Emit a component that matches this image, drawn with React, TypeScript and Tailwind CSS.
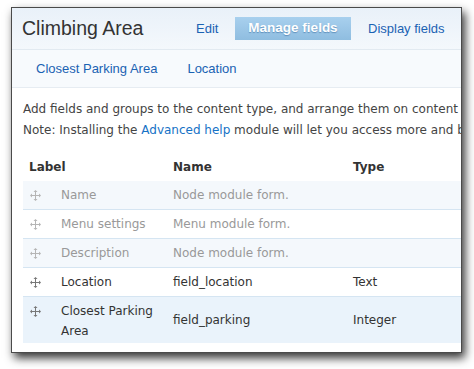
import React from "react";

const Drag = ({ faded }: { faded?: boolean }) => (
  <svg width="11" height="11" viewBox="0 0 11 11" className="shrink-0">
    <g fill={faded ? "#b5b5b5" : "#777"}>
      <rect x="5" y="1" width="1" height="9" />
      <rect x="1" y="5" width="9" height="1" />
      <polygon points="5.5,0 3.5,2 7.5,2" />
      <polygon points="5.5,11 3.5,9 7.5,9" />
      <polygon points="0,5.5 2,3.5 2,7.5" />
      <polygon points="11,5.5 9,3.5 9,7.5" />
    </g>
  </svg>
);

const rows = [
  { label: ["Name"], name: "Node module form.", type: "", faded: true, bg: "bg-[#f4f8fc]" },
  { label: ["Menu settings"], name: "Menu module form.", type: "", faded: true, bg: "bg-white" },
  { label: ["Description"], name: "Node module form.", type: "", faded: true, bg: "bg-[#f4f8fc]" },
  { label: ["Location"], name: "field_location", type: "Text", faded: false, bg: "bg-white" },
  { label: ["Closest Parking", "Area"], name: "field_parking", type: "Integer", faded: false, bg: "bg-[#eaf3fb]" },
];

export default function App() {
  return (
    <div className="w-[474px] h-[369px] bg-white pl-[11px] pt-[7px]">
      <div
        className="w-[451px] h-[346px] overflow-hidden border border-[#4a4a4a] bg-white flex flex-col shadow-[3px_5px_9px_rgba(0,0,0,0.8)]"
      >
        <div className="h-[42px] shrink-0 flex items-center border-b border-[#e2eaf1] bg-gradient-to-b from-[#e9f1f9] to-[#f4f8fc]">
          <div className="pl-[10px] w-[184px] text-[19.5px] text-[#333] font-['Liberation_Sans',Arial,sans-serif] leading-none">
            Climbing Area
          </div>
          <div className="flex items-center font-['Liberation_Sans',Arial,sans-serif] text-[13px]">
            <span className="text-[#1a62b3] pl-[0px] w-[39px]">Edit</span>
            <span className="h-[23px] w-[116px] flex items-center justify-center text-white font-bold text-[13.5px] bg-gradient-to-b from-[#a8d0ee] to-[#8fbde0] [text-shadow:0_1px_1px_rgba(60,110,160,0.6)]">
              Manage fields
            </span>
            <span className="text-[#1a62b3] pl-[17px]">Display fields</span>
          </div>
        </div>
        <div className="h-[38px] shrink-0 flex items-center border-b border-[#e6ecf2] bg-[#f7fafd] font-['Liberation_Sans',Arial,sans-serif] text-[13px] text-[#1a62b3]">
          <span className="pl-[24px]">Closest Parking Area</span>
          <span className="pl-[30px]">Location</span>
        </div>
        <div className="pl-[11px] pt-[11px] font-['DejaVu_Sans',Verdana,sans-serif] text-[12px] text-[#444] whitespace-nowrap">
          <div className="leading-[21px]">Add fields and groups to the content type, and arrange them on content display.</div>
          <div className="leading-[21px]">
            Note: Installing the <span className="text-[#1672c6]">Advanced help</span> module will let you access more and better help.
          </div>
          <div className="mt-[11px] w-[470px]">
            <div className="h-[29px] flex items-center font-bold text-[#333]">
              <div className="w-[150px] pl-[6px]">Label</div>
              <div className="w-[180px]">Name</div>
              <div>Type</div>
            </div>
            {rows.map((r, i) => (
              <div
                key={i}
                className={`${r.bg} flex border-b border-[#d5e5f2] ${r.label.length > 1 ? "h-[46px] border-b-0" : "h-[29px]"} ${r.faded ? "text-[#999]" : "text-[#333]"}`}
              >
                <div className="w-[150px] flex items-start pt-[4px] leading-[20px]">
                  <div className="w-[38px] pl-[7px] pt-[5px]">
                    <Drag faded={r.faded} />
                  </div>
                  <div>
                    {r.label.map((l, j) => (
                      <div key={j}>{l}</div>
                    ))}
                  </div>
                </div>
                <div className="w-[180px] flex items-center">{r.name}</div>
                <div className="flex items-center">{r.type}</div>
              </div>
            ))}
          </div>
        </div>
      </div>
    </div>
  );
}
